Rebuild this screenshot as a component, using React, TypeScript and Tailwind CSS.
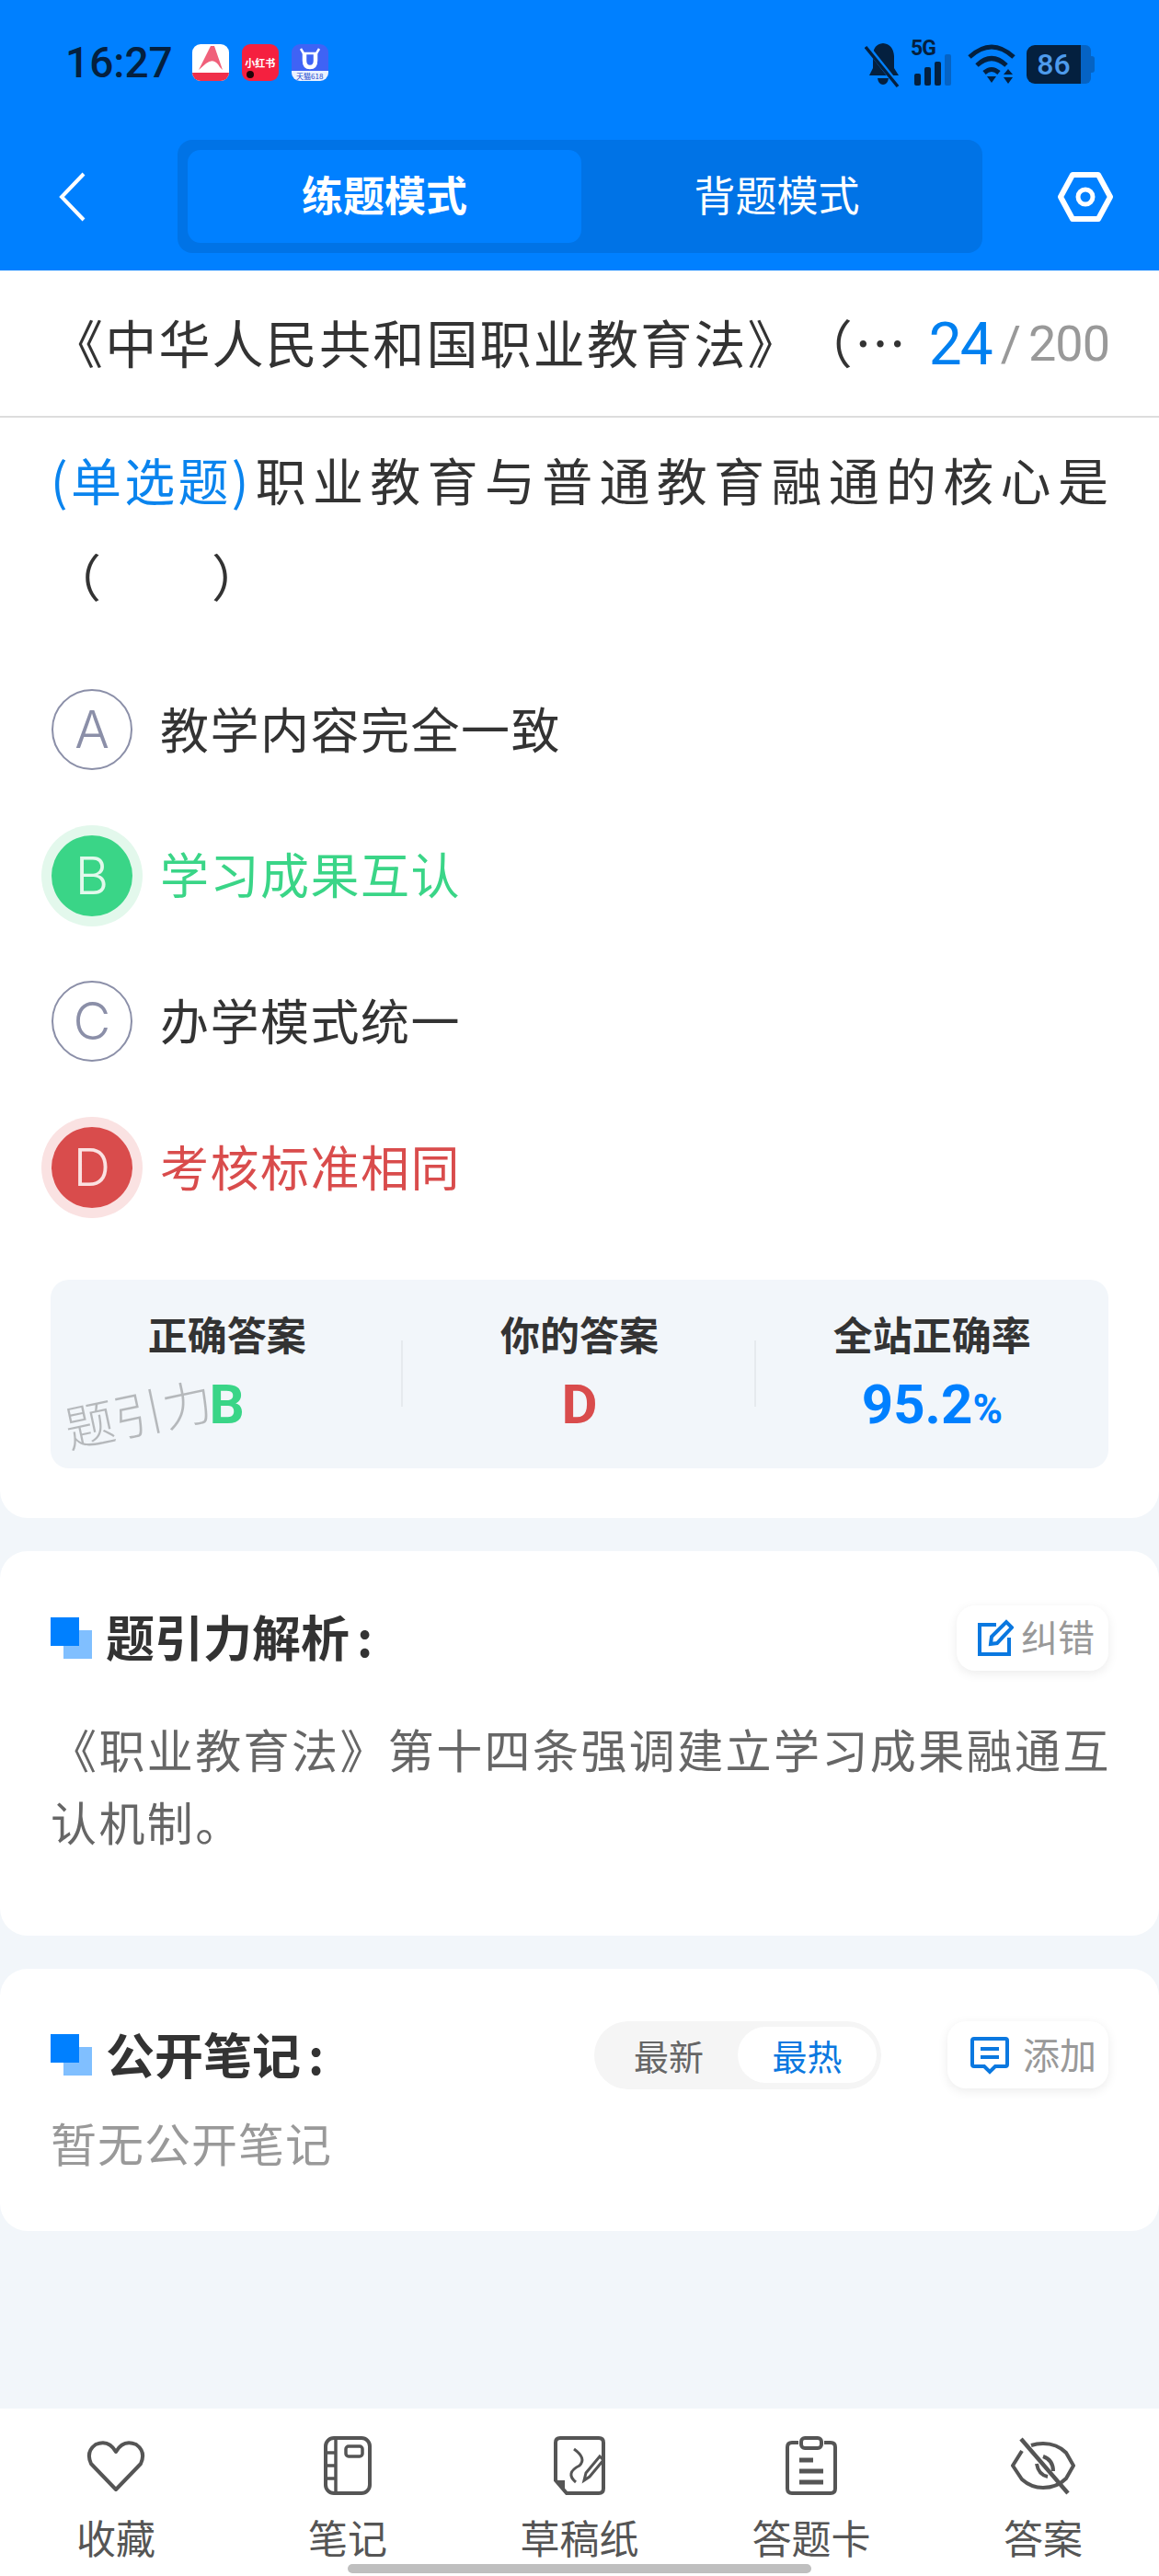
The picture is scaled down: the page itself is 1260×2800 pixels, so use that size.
import React from "react";

const Squares: React.FC = () => (
  <div className="relative w-[45px] h-[45px] shrink-0">
    <div className="absolute left-[14px] top-[14px] w-[31px] h-[31px] bg-[#80bfff]" />
    <div className="absolute left-0 top-0 w-[31px] h-[31px] bg-[#0080ff]" />
  </div>
);

const AppIcons: React.FC = () => (
  <div className="flex items-center gap-[14px]">
    <div className="w-[40px] h-[40px] rounded-[9px] bg-white overflow-hidden flex flex-col justify-between">
      <svg viewBox="0 0 40 31" className="w-[40px] h-[31px]">
        <path d="M20 2 L7 28 L15 21 Q24 14 30 25 L33 28 L24 2 Z" fill="#f0607a" />
      </svg>
      <div className="h-[9px] bg-[#f0304a]" />
    </div>
    <div className="w-[40px] h-[40px] rounded-[9px] bg-[#f5203f] flex flex-col items-center pt-[14px] relative">
      <span className="text-[11px] leading-[12px] font-bold text-white whitespace-nowrap">小红书</span>
      <div className="absolute left-[5px] bottom-[3px] w-[8px] h-[8px] rounded-full bg-[#20060a] border-2 border-[#20060a]" />
    </div>
    <div className="w-[40px] h-[40px] rounded-[9px] bg-[#3f63f5] overflow-hidden flex flex-col justify-between">
      <svg viewBox="0 0 40 29" className="w-[40px] h-[29px]">
        <path d="M10 5 L13 10 H27 L30 5" stroke="#fff" strokeWidth="2.5" fill="none" />
        <path d="M14 10 V18 Q14 25 20 25 Q26 25 26 18 V10" stroke="#fff" strokeWidth="4.5" fill="none" />
      </svg>
      <div className="h-[11px] bg-[#eaf2ff] text-[8px] leading-[11px] text-center text-[#2244cc] whitespace-nowrap">天猫618</div>
    </div>
  </div>
);

const StatusRight: React.FC = () => (
  <div className="flex items-center">
    <svg viewBox="0 0 40 52" className="w-[40px] h-[52px]">
      <path d="M20 3 Q31 4 32 17 V30 L37 38 H5 L9 30 V17 Q9 4 20 3 Z" fill="#04203f" />
      <path d="M14 41 H26 Q25 48 20 48 Q15 48 14 41 Z" fill="#04203f" />
      <path d="M2 6 L37 50" stroke="#0080ff" strokeWidth="6" />
      <path d="M1 7 L36 50" stroke="#04203f" strokeWidth="3.5" />
    </svg>
    <div className="relative w-[50px] h-[52px] ml-[12px]">
      <span className="absolute left-[-2px] top-[-3px] text-[23px] leading-[24px] font-bold text-[#04203f] tracking-[-1px]" style={{ fontFamily: "Roboto" }}>5G</span>
      <div className="absolute left-[2px] bottom-[3px] flex items-end gap-[4px]">
        <div className="w-[7px] h-[13px] rounded-[2px] bg-[#04203f]" />
        <div className="w-[7px] h-[20px] rounded-[2px] bg-[#04203f]" />
        <div className="w-[7px] h-[26px] rounded-[2px] bg-[#04203f]" />
        <div className="w-[7px] h-[34px] rounded-[2px] bg-[#0563c4]" />
      </div>
    </div>
    <svg viewBox="0 0 54 44" className="w-[54px] h-[44px] ml-[10px]">
      <path d="M2 14 Q26 -8 50 14" stroke="#04203f" strokeWidth="5" fill="none" />
      <path d="M10 23 Q26 8 42 23" stroke="#04203f" strokeWidth="5" fill="none" />
      <path d="M18 31 Q26 24 34 31" stroke="#04203f" strokeWidth="5" fill="none" />
      <path d="M21 35 H31 L26 42 Z" fill="#04203f" />
      <path d="M44 27 L49 33 H39 Z M39 36 H49 L44 43 Z" fill="#04203f" />
    </svg>
    <div className="ml-[10px] flex items-center h-[42px]">
      <div className="w-[59px] h-[42px] rounded-l-[9px] bg-[#04203f] text-[#4d9bec] text-[32px] leading-[42px] font-medium text-center" style={{ fontFamily: "Roboto" }}>86</div>
      <div className="w-[11px] h-[42px] bg-[#0563c4] rounded-r-[6px]" />
      <div className="w-[4px] h-[18px] bg-[#0563c4] rounded-r-[3px]" />
    </div>
  </div>
);

const Option: React.FC<{ letter: string; text: string; state?: "right" | "wrong" }> = ({ letter, text, state }) => {
  let circle = "border-2 border-[#8b8fa8] text-[#8b8fa8]";
  let label = "text-[#333333]";
  if (state === "right") {
    circle = "bg-[#3ad587] text-[#e2f9ec] shadow-[0_0_0_11px_#e3f8ec]";
    label = "text-[#3ad587]";
  }
  if (state === "wrong") {
    circle = "bg-[#d94c4c] text-[#fbe2e2] shadow-[0_0_0_11px_#fae2e2]";
    label = "text-[#d94c4c]";
  }
  return (
    <div className="h-[158.7px] flex items-center">
      <div className={`w-[88px] h-[88px] ml-[1px] mt-[3px] rounded-full flex items-center justify-center text-[56px] font-light ${circle}`} style={{ fontFamily: "Inter" }}>
        {letter}
      </div>
      <div className={`ml-[30px] text-[53px] tracking-[1.5px] ${label}`}>{text}</div>
    </div>
  );
};

const Stat: React.FC<{ label: string; children: React.ReactNode; border?: boolean }> = ({ label, children, border }) => (
  <div className="relative flex flex-col items-center pt-[34px]">
    {border && <div className="absolute right-0 top-[66px] w-[2px] h-[72px] bg-[#e6eaee]" />}
    <div className="text-[43px] leading-[48px] font-bold text-[#333333]">{label}</div>
    <div className="mt-[24px] text-[60px] leading-[60px] font-bold" style={{ fontFamily: "Roboto" }}>{children}</div>
  </div>
);

const Tool: React.FC<{ label: string; children: React.ReactNode }> = ({ label, children }) => (
  <div className="flex flex-col items-center pt-[27px]">
    <div className="h-[70px] flex items-center justify-center">{children}</div>
    <div className="mt-[18px] text-[43px] leading-[48px] text-[#555555]">{label}</div>
  </div>
);

export default function App() {
  return (
    <div className="w-[1260px] h-[2800px] relative flex flex-col bg-[#f2f6fa] overflow-hidden" style={{ fontFamily: '"Noto Sans CJK SC", sans-serif' }}>
      {/* header */}
      <div className="h-[294px] bg-[#0080ff] shrink-0">
        <div className="h-[152px] flex items-start justify-between pl-[71px] pr-[70px] pt-[44px]">
          <div className="flex items-center gap-[21px]">
            <span className="text-[46px] leading-[48px] font-medium text-[#04203f]" style={{ fontFamily: "Roboto" }}>16:27</span>
            <AppIcons />
          </div>
          <StatusRight />
        </div>
        <div className="flex items-center pl-[64px] pr-[50px]">
          <svg viewBox="0 0 30 54" className="w-[30px] h-[54px]">
            <path d="M27 2 L3 27 L27 52" stroke="#fff" strokeWidth="4" fill="none" />
          </svg>
          <div className="ml-[99px] w-[875px] h-[123px] bg-[#0073e6] rounded-[16px] p-[11px] flex">
            <div className="w-[428px] h-[101px] pb-[5px] bg-[#0080ff] rounded-[14px] flex items-center justify-center text-[45px] font-bold text-white">练题模式</div>
            <div className="flex-1 pb-[5px] flex items-center justify-center text-[45px] text-white">背题模式</div>
          </div>
          <svg viewBox="0 0 60 54" className="ml-[82px] w-[60px] h-[54px]">
            <path d="M16 3 H44 L57 27 L44 51 H16 L3 27 Z" stroke="#fff" strokeWidth="6" fill="none" strokeLinejoin="round" />
            <circle cx="30" cy="27" r="8" stroke="#fff" strokeWidth="5" fill="none" />
          </svg>
        </div>
      </div>

      {/* question title */}
      <div className="bg-white h-[160px] shrink-0 border-b-2 border-[#dddddd] flex items-center justify-between pl-[56px] pr-[54px] pb-[4px]">
        <div className="text-[56px] tracking-[2.2px] [text-spacing-trim:space-all] text-[#333333] whitespace-nowrap">《中华人民共和国职业教育法》（…</div>
        <div className="flex items-baseline whitespace-nowrap" style={{ fontFamily: "Roboto" }}>
          <span className="relative top-[4px] text-[64px] text-[#0080f0] tracking-[-2px]">24</span>
          <span className="text-[54px] text-[#999999] ml-[10px]">/</span>
          <span className="text-[54px] text-[#999999] ml-[8px] tracking-[-1px]">200</span>
        </div>
      </div>

      {/* question card */}
      <div className="bg-white rounded-b-[30px] h-[1196px] shrink-0 px-[55px]">
        <div className="text-[55px] leading-[104px] text-[#333333] pt-[14px] whitespace-nowrap">
          <span className="text-[#0a84ee] tracking-[3.3px]">(单选题)</span>
          <span className="ml-[4px] tracking-[7.3px]">职业教育与普通教育融通的核心是</span>
          <div className="[text-spacing-trim:space-all]">（<span className="inline-block w-[120px]" />）</div>
        </div>
        <div className="mt-[36px]">
          <Option letter="A" text="教学内容完全一致" />
          <Option letter="B" text="学习成果互认" state="right" />
          <Option letter="C" text="办学模式统一" />
          <Option letter="D" text="考核标准相同" state="wrong" />
        </div>
        <div className="relative mt-[44px] h-[205px] bg-[#f2f6fa] rounded-[20px] grid grid-cols-3">
          <Stat label="正确答案" border>
            <span className="text-[#3ad587]">B</span>
          </Stat>
          <Stat label="你的答案" border>
            <span className="text-[#d94c4c]">D</span>
          </Stat>
          <Stat label="全站正确率">
            <span className="text-[#0080ff]">95.2<span className="text-[44px]">%</span></span>
          </Stat>
          <div className="absolute left-[14px] top-[114px] text-[54px] leading-[60px] font-light text-[#00000040] -rotate-12 whitespace-nowrap">题引力</div>
        </div>
      </div>

      {/* analysis */}
      <div className="mt-[36px] bg-white rounded-[30px] h-[418px] shrink-0 px-[55px] pt-[56px]">
        <div className="flex items-center justify-between">
          <div className="flex items-center gap-[15px]">
            <Squares />
            <div className="text-[53px] leading-[72px] pb-[5px] font-bold text-[#333333]">题引力解析<span className="ml-[8px]">:</span></div>
          </div>
          <div className="w-[165px] h-[71px] pl-[7px] rounded-[20px] bg-white shadow-[0_3px_12px_rgba(0,0,0,0.08)] flex items-center justify-center gap-[8px]">
            <svg viewBox="0 0 40 42" className="w-[40px] h-[42px]">
              <path d="M21 6 H3 V38 H35 V20" stroke="#0a78e0" strokeWidth="4" fill="none" />
              <path d="M15 27 L16 19 L32 3 L38 9 L22 26 Z" stroke="#0a78e0" strokeWidth="4" fill="none" />
            </svg>
            <span className="text-[40px] leading-[50px] mb-[5px] text-[#999999]">纠错</span>
          </div>
        </div>
        <div className="mt-[42px] mr-[-8px] text-[50px] leading-[79px] tracking-[2.4px] text-[#666666]">
          《职业教育法》第十四条强调建立学习成果融通互认机制。
        </div>
      </div>

      {/* public notes */}
      <div className="mt-[36px] bg-white rounded-[30px] h-[285px] shrink-0 px-[55px] pt-[56px]">
        <div className="flex items-center">
          <Squares />
          <div className="ml-[15px] text-[53px] leading-[72px] pb-[3px] font-bold text-[#333333]">公开笔记<span className="ml-[8px]">:</span></div>
          <div className="ml-auto w-[312px] h-[74px] rounded-full bg-[#f5f5f5] flex items-center pl-[43px] pr-[5px]">
            <span className="text-[38px] text-[#666666]">最新</span>
            <div className="ml-auto w-[151px] h-[61px] rounded-full bg-white flex items-center justify-center text-[38px] text-[#0a78e0]">最热</div>
          </div>
          <div className="ml-[72px] w-[175px] h-[73px] pl-[11px] rounded-[20px] bg-white shadow-[0_3px_12px_rgba(0,0,0,0.08)] flex items-center justify-center gap-[14px]">
            <svg viewBox="0 0 44 44" className="w-[44px] h-[44px]">
              <path d="M5 4 H39 Q41 4 41 6 V32 Q41 34 39 34 H28 L22 40 L16 34 H5 Q3 34 3 32 V6 Q3 4 5 4 Z" stroke="#0a78e0" strokeWidth="4" fill="none" />
              <path d="M12 15 H32 M12 24 H32" stroke="#0a78e0" strokeWidth="4" />
            </svg>
            <span className="text-[40px] leading-[50px] mb-[3px] text-[#999999]">添加</span>
          </div>
        </div>
        <div className="mt-[22px] text-[50px] leading-[70px] tracking-[1px] text-[#999999]">暂无公开笔记</div>
      </div>

      {/* bottom toolbar */}
      <div className="mt-auto h-[182px] bg-white shrink-0 grid grid-cols-5">
        <Tool label="收藏">
          <svg viewBox="0 0 64 58" className="w-[64px] h-[58px]">
            <path d="M32 55 L5 27 Q-1 14 10 6 Q24 0 32 14 Q40 0 54 6 Q65 14 59 27 Z" stroke="#555" strokeWidth="4" fill="none" strokeLinejoin="round" />
          </svg>
        </Tool>
        <Tool label="笔记">
          <svg viewBox="0 0 52 64" className="w-[52px] h-[64px]">
            <rect x="2" y="2" width="48" height="60" rx="9" stroke="#555" strokeWidth="4" fill="none" />
            <path d="M13 2 V62 M2 18 H13 M2 32 H13 M2 46 H13" stroke="#555" strokeWidth="3.5" />
            <rect x="24" y="11" width="18" height="11" rx="3" stroke="#555" strokeWidth="3.5" fill="none" />
          </svg>
        </Tool>
        <Tool label="草稿纸">
          <svg viewBox="0 0 56 64" className="w-[56px] h-[64px]">
            <path d="M7 2 H49 Q54 2 54 7 V57 Q54 62 49 62 H14 L2 48 V7 Q2 2 7 2 Z" stroke="#555" strokeWidth="4" fill="none" />
            <path d="M2 48 H12 V62 Z" fill="#555" />
            <path d="M22 14 Q36 24 28 32 Q12 40 24 50" stroke="#555" strokeWidth="3" fill="none" />
            <path d="M33 48 L35 40 L50 22 L54 26 L39 44 Z" stroke="#555" strokeWidth="3" fill="#fff" />
          </svg>
        </Tool>
        <Tool label="答题卡">
          <svg viewBox="0 0 56 64" className="w-[56px] h-[64px]">
            <path d="M14 7 H7 Q2 7 2 12 V57 Q2 62 7 62 H49 Q54 62 54 57 V12 Q54 7 49 7 H42" stroke="#555" strokeWidth="4" fill="none" />
            <rect x="17" y="2" width="22" height="11" rx="4" stroke="#555" strokeWidth="4" fill="none" />
            <path d="M15 26 H30 M15 38 H41 M15 50 H41" stroke="#555" strokeWidth="5" />
          </svg>
        </Tool>
        <Tool label="答案">
          <svg viewBox="0 0 70 64" className="w-[70px] h-[64px]">
            <path d="M12 16 L2 32 L12 47 Q22 56 35 56 Q50 56 60 46 L68 32 L60 18 Q50 8 35 8 Q28 8 22 10" stroke="#555" strokeWidth="4" fill="none" />
            <path d="M28 30 Q30 42 40 44 M35 22 Q46 26 46 38" stroke="#555" strokeWidth="4" fill="none" />
            <path d="M11 3 L62 62" stroke="#555" strokeWidth="4.5" />
          </svg>
        </Tool>
      </div>
      <div className="absolute left-[378px] top-[2787px] w-[504px] h-[10px] rounded-full bg-[#bfbfbf]" />
    </div>
  );
}
